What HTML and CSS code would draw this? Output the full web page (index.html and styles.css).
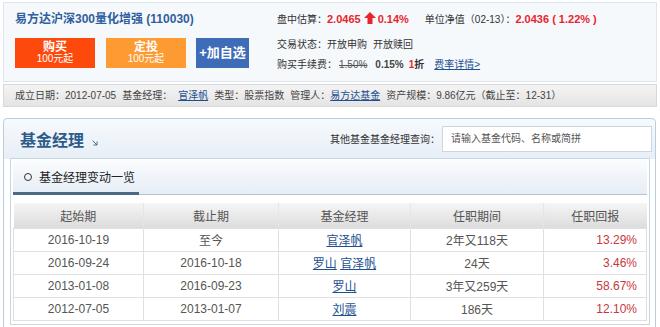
FILE: index.html
```html
<!DOCTYPE html>
<html lang="zh-CN">
<head>
    <meta charset="UTF-8">
    <title>易方达沪深300量化增强 - 基金经理</title>
    <link rel="stylesheet" href="styles.css">
</head>
<body>
    <div class="fund-top">
        <div class="fund-left">
            <h1 class="fund-name">易方达沪深300量化增强 (110030)</h1>
            <div class="fund-btns">
                <a class="btn btn-buy" href="#"><b>购买</b><span>100元起</span></a>
                <a class="btn btn-plan" href="#"><b>定投</b><span>100元起</span></a>
                <a class="btn btn-fav" href="#">+加自选</a>
            </div>
        </div>
        <div class="fund-right">
            <p class="row">盘中估算：<b class="red">2.0465</b><svg class="up" width="12" height="12" viewBox="0 0 12 12"><polygon points="6,0 12,6 8.5,6 8.5,12 3.5,12 3.5,6 0,6" fill="#e8252e"/></svg><b class="red">0.14%</b><span class="nav">单位净值（02-13）：</span><b class="red">2.0436 ( 1.22% )</b></p>
            <p class="row row-gap">交易状态：开放申购<span class="gap">开放赎回</span></p>
            <p class="row">购买手续费：<s class="old">1.50%</s><b class="rate">0.15%</b><b class="disc"><span class="red">1</span>折</b><a class="link detail" href="#">费率详情&gt;</a></p>
        </div>
    </div>

    <div class="fund-info">
        成立日期：2012-07-05<span class="sp">基金经理：</span><a class="link sp" href="#">官泽帆</a><span class="sp">类型：股票指数</span><span class="sp">管理人：</span><a class="link" href="#">易方达基金</a><span class="sp">资产规模：9.86亿元（截止至：12-31）</span>
    </div>

    <div class="mgr-box">
        <div class="mgr-head">
            <h2 class="mgr-title">基金经理</h2>
            <svg class="more" width="6" height="6" viewBox="0 0 6 6"><path d="M0.5 0.5 L5 5 M5 1.5 V5 H1.5" stroke="#4a6f96" stroke-width="1" fill="none"/></svg>
            <div class="mgr-search">
                <label for="q">其他基金基金经理查询：</label>
                <input id="q" type="text" placeholder="请输入基金代码、名称或简拼">
            </div>
        </div>
        <div class="mgr-inner">
            <div class="mgr-sub">
                <span class="sub-title"><i class="dot"></i>基金经理变动一览</span>
            </div>
            <table class="mgr-table">
                <thead>
                    <tr><th class="c1">起始期</th><th class="c2">截止期</th><th class="c3">基金经理</th><th class="c4">任职期间</th><th class="c5">任职回报</th></tr>
                </thead>
                <tbody>
                    <tr><td>2016-10-19</td><td>至今</td><td><a class="link" href="#">官泽帆</a></td><td>2年又118天</td><td class="ret">13.29%</td></tr>
                    <tr><td>2016-09-24</td><td>2016-10-18</td><td><a class="link" href="#">罗山</a> <a class="link" href="#">官泽帆</a></td><td>24天</td><td class="ret">3.46%</td></tr>
                    <tr><td>2013-01-08</td><td>2016-09-23</td><td><a class="link" href="#">罗山</a></td><td>3年又259天</td><td class="ret">58.67%</td></tr>
                    <tr><td>2012-07-05</td><td>2013-01-07</td><td><a class="link" href="#">刘震</a></td><td>186天</td><td class="ret">12.10%</td></tr>
                </tbody>
            </table>
        </div>
    </div>
</body>
</html>
```

FILE: styles.css
```css
*{
    margin:0;
    padding:0;
    box-sizing:border-box;
    font-family:"Liberation Sans", "Noto Sans CJK SC", sans-serif;
}
body {
    background:#fff;
    color:#333;
    font-size:10px;
    width:660px;
}
a { text-decoration:none; }
.link {
    color:#1d4f91;
    text-decoration:underline;
}
.red { color:#e8252e; }

/* top summary */
.fund-top {
    display:flex;
    margin:2px 3px 0;
    height:80px;
    border:1px solid #dde6ee;
    background:#f6f9fc;
}
.fund-left {
    width:273px;
    flex-shrink:0;
    padding:8px 0 0 11px;
}
.fund-name {
    font-size:12px;
    line-height:16px;
    color:#2f5f9e;
    font-weight:bold;
}
.fund-btns {
    display:flex;
    gap:11px;
    margin-top:11px;
}
.btn {
    display:flex;
    flex-direction:column;
    align-items:center;
    justify-content:center;
    width:80px;
    height:30px;
    color:#fff;
    line-height:12px;
}
.btn b { font-size:12px; }
.btn span { font-size:10px; }
.btn-buy { background:#fd4a0c; }
.btn-plan { background:#fd9a32; }
.btn-fav {
    width:53px;
    margin-left:-1px;
    background:#3f6cb6;
    font-size:13px;
    font-weight:bold;
}
.fund-right {
    padding-top:8px;
}
.row {
    line-height:16px;
    color:#333;
    white-space:nowrap;
}
.row b { font-size:11px; }
.row-gap { margin:9px 0 4px; }
.up {
    vertical-align:-1px;
    margin:0 2px 0 3px;
}
.nav { margin-left:16px; }
.gap { margin-left:6px; }
.old {
    margin-left:2px;
    color:#555;
    font-size:10px;
}
.row .rate {
    margin-left:8px;
    font-size:10px;
    color:#444;
}
.row .disc {
    margin-left:5px;
    font-size:10px;
}
.detail { margin-left:10px; }

/* info bar */
.fund-info {
    margin:2px 3px 0;
    height:23px;
    line-height:21px;
    padding-left:11px;
    border:1px solid #d8d8d8;
    background:linear-gradient(#f4f4f4, #e4e4e4);
    color:#444;
    white-space:nowrap;
}
.sp { margin-left:6px; }

/* manager section */
.mgr-box {
    margin:11px 4px 0 3px;
    border:1px solid #b7cde0;
    border-radius:4px 4px 0 0;
    background:linear-gradient(#f7fafd, #e6eef6 40px, #fff 40px);
    padding-bottom:10px;
}
.mgr-head {
    display:flex;
    align-items:center;
    height:39px;
    padding:0 3px 0 16px;
}
.mgr-title {
    font-size:16px;
    color:#2d5b8a;
}
.more { margin:8px 0 0 8px; }
.mgr-search {
    display:flex;
    align-items:center;
    margin-left:auto;
    color:#333;
}
.mgr-search input {
    width:210px;
    height:26px;
    margin-left:2px;
    padding-left:8px;
    border:1px solid #cdd6df;
    font-size:10px;
    color:#666;
    background:#fff;
}
.mgr-search input::placeholder { color:#555; }
.mgr-inner {
    margin:0 5px 0 6px;
    border:1px solid #c5d6e4;
    padding:1px 2px 3px;
    background:#fff;
}
.mgr-sub {
    height:35px;
    display:flex;
    align-items:flex-end;
    border-bottom:1px solid #b3c4d3;
    background:linear-gradient(#fbfcfe, #e5edf5);
}
.sub-title {
    display:flex;
    align-items:center;
    width:126px;
    height:34px;
    margin-bottom:-1px;
    padding-left:11px;
    border-bottom:3px solid #4d6984;
    font-size:12px;
    color:#222;
}
.dot {
    width:8px;
    height:8px;
    margin-right:7px;
    border:1.5px solid #333;
    border-radius:50%;
}
.mgr-table {
    width:100%;
    margin-top:8px;
    border-collapse:collapse;
    font-size:12px;
    color:#555;
}
.mgr-table th {
    height:25px;
    font-weight:normal;
    background:linear-gradient(#f5f5f5, #dcdcdc);
    border-left:1px solid #e6e6e6;
}
.mgr-table td {
    height:23px;
    text-align:center;
    border:1px solid #e0e0e0;
}
.mgr-table th:first-child { border-left:none; }
.c1 { width:130px; }
.c2 { width:135px; }
.c3 { width:132px; }
.c4 { width:133px; }
.mgr-table .ret {
    text-align:right;
    padding-right:9px;
    color:#c8383c;
}
```
